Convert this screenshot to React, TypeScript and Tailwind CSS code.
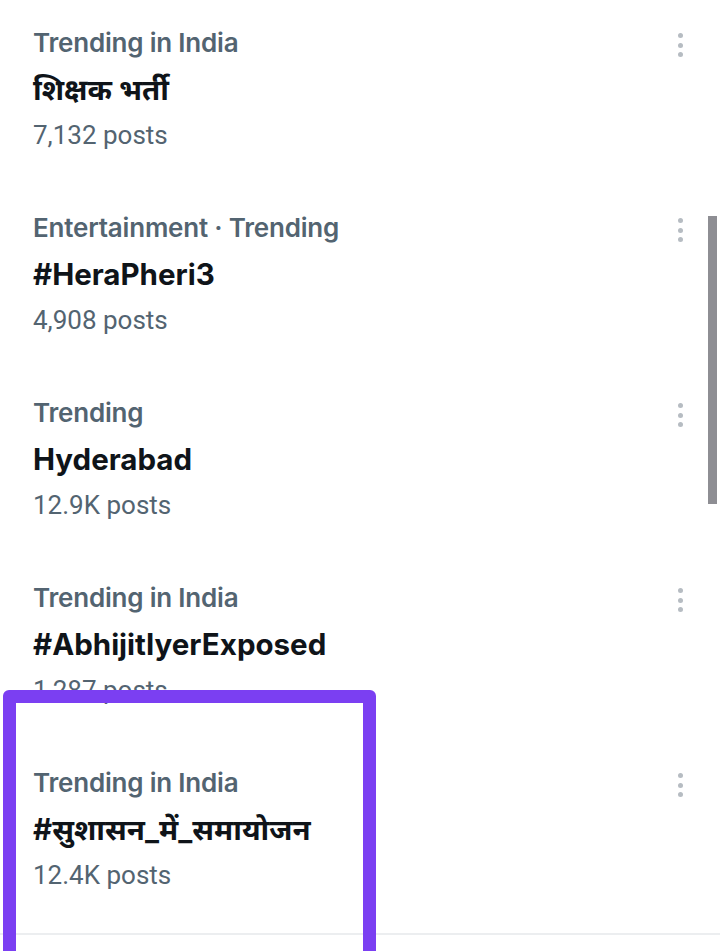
import React from "react";

type Trend = { category: string; title: string; posts: string };

const trends: Trend[] = [
  { category: "Trending in India", title: "शिक्षक भर्ती", posts: "7,132 posts" },
  { category: "Entertainment · Trending", title: "#HeraPheri3", posts: "4,908 posts" },
  { category: "Trending", title: "Hyderabad", posts: "12.9K posts" },
  { category: "Trending in India", title: "#AbhijitIyerExposed", posts: "1,287 posts" },
  { category: "Trending in India", title: "#सुशासन_में_समायोजन", posts: "12.4K posts" },
];

function Dots() {
  return (
    <div className="flex flex-col items-center gap-[4.5px] pt-[13px]">
      <span className="block h-[5px] w-[5px] rounded-full bg-[#b6bcc2]" />
      <span className="block h-[5px] w-[5px] rounded-full bg-[#b6bcc2]" />
      <span className="block h-[5px] w-[5px] rounded-full bg-[#b6bcc2]" />
    </div>
  );
}

const inter = { fontFamily: "Inter, 'Noto Sans Devanagari', 'Noto Sans', sans-serif" };
const roboto = { fontFamily: "Roboto, 'Noto Sans', sans-serif" };

export default function App() {
  return (
    <div className="relative h-[951px] w-[720px] overflow-hidden bg-white" style={roboto}>
      <div className="pt-[8px]">
        {trends.map((t, i) => (
          <div key={i} className="flex items-start justify-between pl-[33px] pr-[37px] pt-[12px] pb-[35px]">
            <div className="flex flex-col">
              <div className="text-[26px] font-semibold leading-[46px] tracking-[-0.2px] text-[#536471]" style={inter}>
                {t.category}
              </div>
              <div className="text-[29.5px] font-bold leading-[46px] text-[#0f1419]" style={inter}>
                {t.title}
              </div>
              <div className="text-[26px] font-normal leading-[46px] text-[#536471]">{t.posts}</div>
            </div>
            <Dots />
          </div>
        ))}
        <div className="h-[2px] w-full bg-[#eceef0]" />
      </div>

      {/* scrollbar */}
      <div className="absolute left-[708px] top-[216px] h-[288px] w-[9px] bg-[#8e8e93]" />

      {/* purple highlight annotation */}
      <div className="absolute left-[3px] top-[690px] h-[300px] w-[373px] rounded-[6px] border-[13px] border-[#7b3ff2]" />
    </div>
  );
}
